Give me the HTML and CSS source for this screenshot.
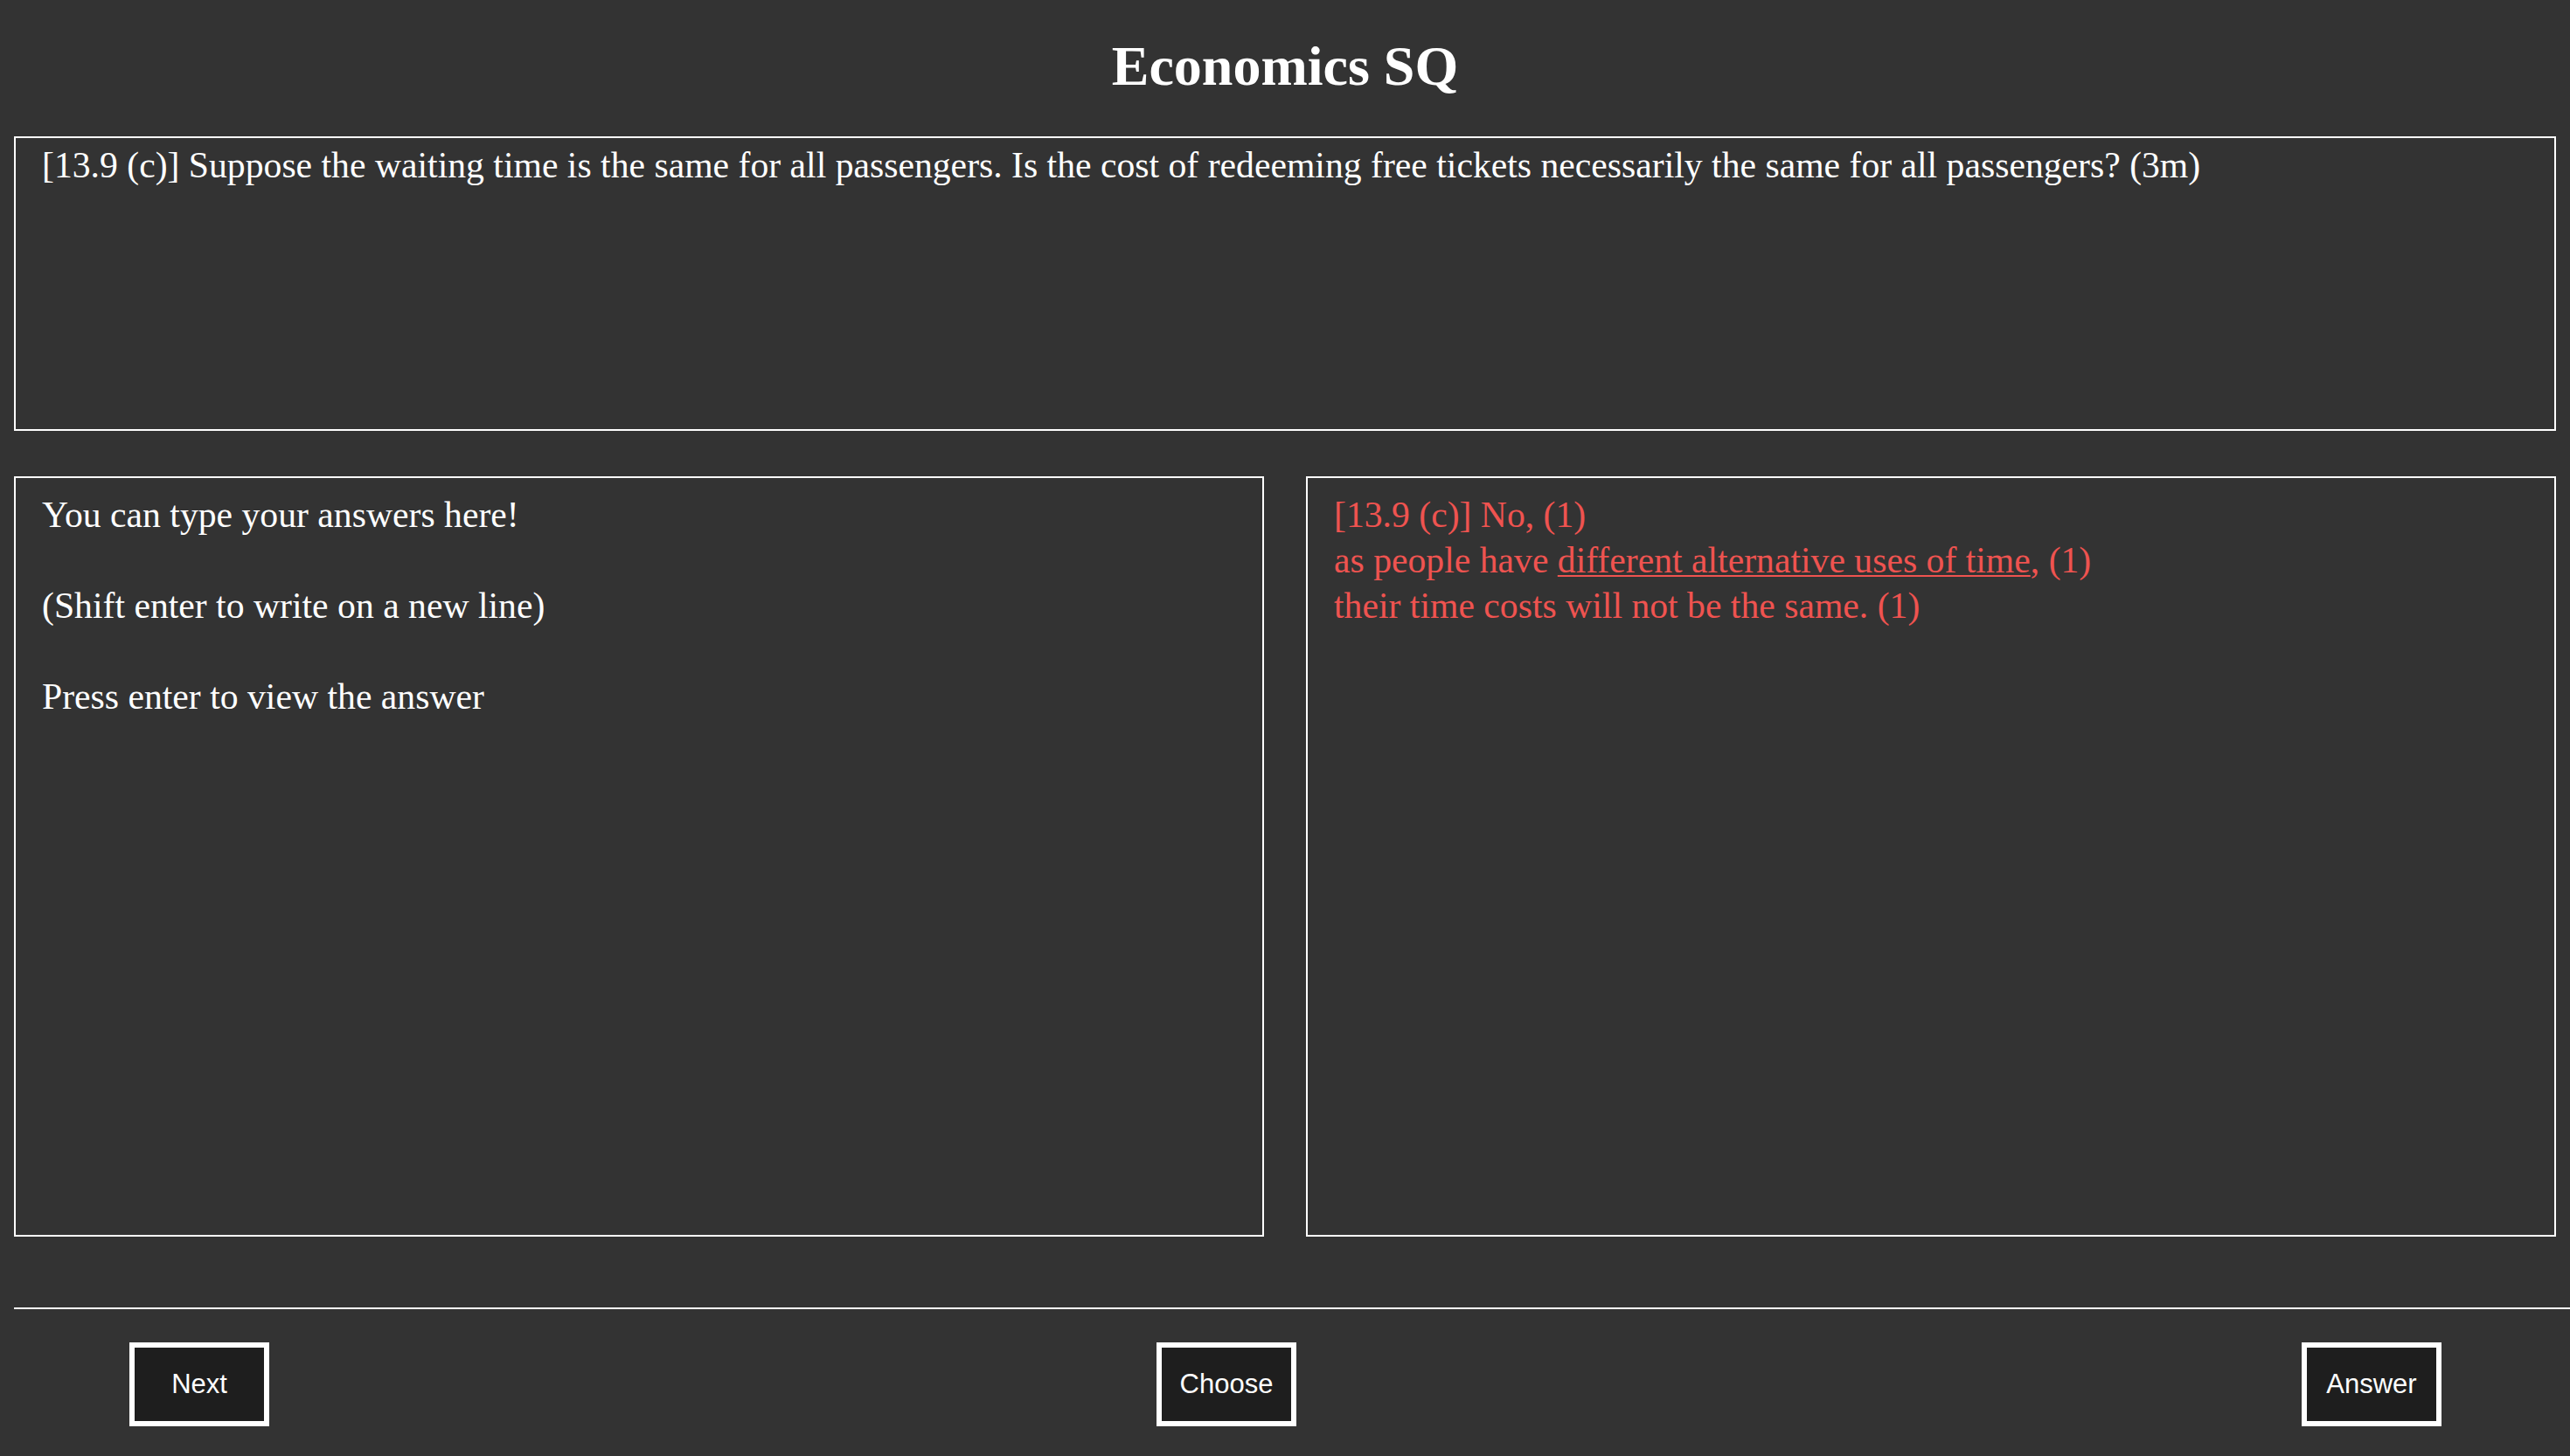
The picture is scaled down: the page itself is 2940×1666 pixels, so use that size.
FILE: index.html
```html
<!DOCTYPE html>
<html lang="en">
<head>
<meta charset="utf-8">
<title>Economics SQ</title>
<link rel="stylesheet" href="styles.css">
</head>
<body>
<div class="page">
  <h1 class="title">Economics SQ</h1>
  <div class="question">[13.9 (c)] Suppose the waiting time is the same for all passengers. Is the cost of redeeming free tickets necessarily the same for all passengers? (3m)</div>
  <div class="panels">
    <div class="panel input">You can type your answers here!

(Shift enter to write on a new line)

Press enter to view the answer</div>
    <div class="panel answer">[13.9 (c)] No, (1)
as people have <u>different alternative uses of time</u>, (1)
their time costs will not be the same. (1)</div>
  </div>
  <hr class="rule">
  <div class="footer">
    <button class="btn">Next</button>
    <button class="btn btn-choose">Choose</button>
    <button class="btn btn-answer">Answer</button>
  </div>
</div>
</body>
</html>
```

FILE: styles.css
```css
html, body {
  margin: 0;
  padding: 0;
  background: #333333;
  color: #ffffff;
  font-family: "Liberation Serif", "Times New Roman", serif;
}

.page {
  height: 1666px;
  display: flex;
  flex-direction: column;
}

.title {
  margin: 0;
  padding-top: 44px;
  height: 64px;
  margin-bottom: 48px;
  font-size: 64px;
  line-height: 64px;
  font-weight: bold;
  text-align: center;
}

.question {
  margin: 0 16px;
  height: 337px;
  box-sizing: border-box;
  border: 2px solid #ffffff;
  padding: 5px 30px;
  font-size: 41.7px;
  line-height: 52px;
}

.panels {
  margin: 52px 16px 0;
  display: flex;
  gap: 48px;
  height: 870px;
}

.panel {
  flex: 1;
  box-sizing: border-box;
  border: 2px solid #ffffff;
  padding: 16px 30px;
  font-size: 41.7px;
  line-height: 52px;
  white-space: pre-line;
}

.answer {
  color: #ef5350;
}

.answer u {
  text-decoration-thickness: 2px;
  text-underline-offset: 3px;
}

.rule {
  margin: 81px 0 0 16px;
  border: 0;
  height: 2px;
  background: #ffffff;
}

.footer {
  display: flex;
  align-items: flex-start;
  padding: 38px 147px 0 148px;
}

.btn {
  width: 160px;
  height: 96px;
  box-sizing: border-box;
  border: 6px solid #ffffff;
  background: #1e1e1e;
  color: #ffffff;
  font-family: "Liberation Sans", Arial, sans-serif;
  font-size: 31px;
  padding: 0;
}

.btn-choose {
  margin-left: 1015px;
}

.btn-answer {
  margin-left: auto;
}
```
